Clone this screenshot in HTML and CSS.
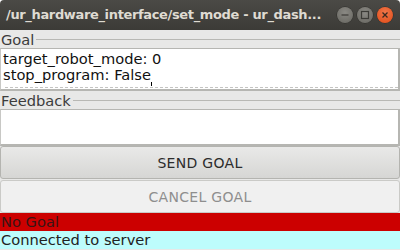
FILE: index.html
```html
<!DOCTYPE html>
<html>
<head>
<meta charset="utf-8">
<link rel="stylesheet" href="styles.css">
</head>
<body>
<div class="window">
  <div class="titlebar">
    <span class="title">/ur_hardware_interface/set_mode - ur_dash...</span>
    <div class="controls">
      <span class="wbtn min"><svg width="16" height="16" viewBox="0 0 16 16"><line x1="4.5" y1="8" x2="11.5" y2="8" stroke="#3c3b37" stroke-width="1.2"/></svg></span>
      <span class="wbtn max"><svg width="16" height="16" viewBox="0 0 16 16"><rect x="4.5" y="4.5" width="7" height="7" fill="none" stroke="#3c3b37" stroke-width="1.2"/></svg></span>
      <span class="wbtn close"><svg width="16" height="16" viewBox="0 0 16 16"><path d="M5.5 5.5 L10.5 10.5 M10.5 5.5 L5.5 10.5" stroke="#3c2a20" stroke-width="1.3"/></svg></span>
    </div>
  </div>
  <div class="content">
    <div class="group">
      <div class="legend"><span class="legend-text">Goal</span><span class="legend-line"></span></div>
      <div class="editor goal">
        <div class="line">target_robot_mode: 0</div>
        <div class="line">stop_program: False<span class="caret"></span></div>
        <div class="dash"></div>
      </div>
    </div>
    <div class="group">
      <div class="legend"><span class="legend-text">Feedback</span><span class="legend-line"></span></div>
      <div class="editor feedback"></div>
    </div>
    <button class="btn send">SEND GOAL</button>
    <button class="btn cancel" disabled>CANCEL GOAL</button>
    <div class="status red">No Goal</div>
    <div class="status cyan">Connected to server</div>
  </div>
</div>
</body>
</html>
```
FILE: styles.css
```css
* { box-sizing: border-box; }
html, body { margin: 0; padding: 0; }
body { width: 400px; height: 250px; overflow: hidden; font-family: "DejaVu Sans", sans-serif; }
.window { width: 400px; height: 250px; display: flex; flex-direction: column; }
.titlebar {
  height: 30px;
  background: linear-gradient(#4b4a46, #3c3b37);
  display: flex;
  align-items: center;
  padding-left: 6px;
  border-radius: 4px 4px 0 0;
}
.title {
  flex: 1;
  color: #dfdbd2;
  font-family: "DejaVu Sans", sans-serif;
  font-weight: bold;
  font-size: 13px;
  white-space: nowrap;
  letter-spacing: -0.35px;
  padding-bottom: 1px;
}
.controls { display: flex; gap: 4px; padding-right: 7px; flex-shrink: 0; }
.wbtn {
  width: 16px; height: 16px; border-radius: 50%;
  display: flex;
  background: radial-gradient(circle at 50% 35%, #8a8984, #66655f);
  box-shadow: 0 0 0 0.5px #2e2d2a;
}
.wbtn.close { background: radial-gradient(circle at 50% 35%, #f2774a, #df4a16); }
.content { flex: 1; background: #e8e8e7; display: flex; flex-direction: column; }
.legend { height: 18px; display: flex; align-items: center; }
.legend-text { font-size: 14.67px; color: #3c3c3c; line-height: 18px; padding-left: 1px; margin-top: 1px; }
.legend-line { flex: 1; height: 1px; background: #b8b8b4; margin-left: 2px; margin-top: 1px; }
.editor { background: #fff; border-right: 2px solid #b6b6b2; border-bottom: 2px solid #b6b6b2; border-top: 1px solid #b6b6b2; border-left: 1px solid #c8c8c5; }
.goal { height: 43px; position: relative; padding: 2px 0 0 2px; }
.line { font-size: 14.67px; color: #111; line-height: 16px; white-space: nowrap; }
.caret { display: inline-block; width: 1px; height: 4px; background: #000; vertical-align: -6px; margin-left: 0; }
.dash { position: absolute; left: 4px; right: 0; bottom: 1px; border-top: 1px dashed #c4c4c2; }
.feedback { height: 37px; }
.btn {
  font-family: "DejaVu Sans", sans-serif;
  font-size: 14px;
  letter-spacing: 0.3px;
  height: 33px;
  margin: 0;
  border-radius: 3px;
  padding: 0;
}
.send { background: linear-gradient(#e9e9e8, #d6d6d4); border: 1px solid #b4b4b0; color: #2c2c2c; }
.cancel { background: #f0f0f0; border: 1px solid #cacac7; color: #8e8e8e; margin-top: 1px; }
.status { font-size: 14.67px; height: 18px; line-height: 18px; padding-left: 1px; white-space: nowrap; }
.red { background: #cc0000; color: #3a1414; }
.cyan { background: #bdfcfc; color: #222; }
```
